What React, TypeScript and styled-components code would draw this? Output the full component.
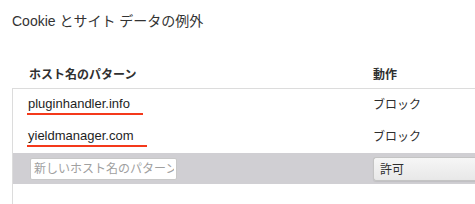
import React from 'react';
import styled, { createGlobalStyle } from 'styled-components';

const GlobalStyle = createGlobalStyle`
  html, body {
    margin: 0;
    padding: 0;
    background: #ffffff;
  }
  body {
    font-family: "Liberation Sans", Arial, "Noto Sans CJK JP", sans-serif;
    color: #333333;
    overflow: hidden;
  }
`;

const Page = styled.div`
  width: 475px;
  height: 204px;
  padding: 12px 0 0 12px;
  box-sizing: border-box;
  overflow: hidden;
`;

const Title = styled.h1`
  margin: 0;
  font-size: 14px;
  font-weight: normal;
  line-height: 18px;
  color: #333333;
  white-space: nowrap;
`;

const HeaderRow = styled.div`
  display: grid;
  grid-template-columns: 344px 1fr;
  margin-top: 29px;
  padding-left: 17px;
  height: 29px;
  align-items: center;
  font-size: 12px;
  font-weight: bold;
  color: #303030;
`;

const Table = styled.div`
  border-top: 1px solid #dcdcdc;
  border-left: 1px solid #dcdcdc;
  min-height: 120px;
  width: 480px;
`;

const Row = styled.div<{ $editing?: boolean }>`
  display: grid;
  grid-template-columns: 345px 1fr;
  align-items: center;
  height: ${({ $editing }) => ($editing ? '31px' : '32px')};
  padding-left: 15px;
  background: ${({ $editing }) => ($editing ? '#d0cfd3' : 'transparent')};
`;

const Host = styled.span`
  display: inline-block;
  justify-self: start;
  margin-left: -1px;
  padding: 0 13px 1px 1px;
  font-size: 13px;
  line-height: 16px;
  color: #1e1e1e;
  border-bottom: 2px solid #f4391b;
`;

const Action = styled.span`
  font-size: 12px;
  line-height: 16px;
  color: #2e2e2e;
`;

const PatternInput = styled.input`
  justify-self: start;
  margin-left: 2px;
  width: 147px;
  height: 22px;
  box-sizing: border-box;
  padding: 0 2px 0 3px;
  border: 1px solid #c8c8c8;
  border-radius: 2px;
  background: #ffffff;
  font-family: inherit;
  font-size: 12px;
  color: #333333;
  outline: none;

  &::placeholder {
    color: #a0a0a0;
  }
`;

const ActionSelect = styled.div`
  display: flex;
  align-items: center;
  height: 24px;
  width: 140px;
  box-sizing: border-box;
  padding-left: 6px;
  border: 1px solid #c4c4c4;
  border-right: none;
  border-radius: 3px 0 0 3px;
  background: linear-gradient(#f6f6f6, #e8e8e8);
  box-shadow: 0 1px 1px rgba(0, 0, 0, 0.08);
  font-size: 12px;
  color: #2e2e2e;
`;

const rules = [
  { host: 'pluginhandler.info', action: 'ブロック' },
  { host: 'yieldmanager.com', action: 'ブロック' },
];

export default function App() {
  return (
    <>
      <GlobalStyle />
      <Page>
        <Title>Cookie とサイト データの例外</Title>
        <HeaderRow>
          <span>ホスト名のパターン</span>
          <span>動作</span>
        </HeaderRow>
        <Table>
          {rules.map((r) => (
            <Row key={r.host}>
              <Host>{r.host}</Host>
              <Action>{r.action}</Action>
            </Row>
          ))}
          <Row $editing>
            <PatternInput placeholder="新しいホスト名のパターン" />
            <ActionSelect>許可</ActionSelect>
          </Row>
        </Table>
      </Page>
    </>
  );
}
